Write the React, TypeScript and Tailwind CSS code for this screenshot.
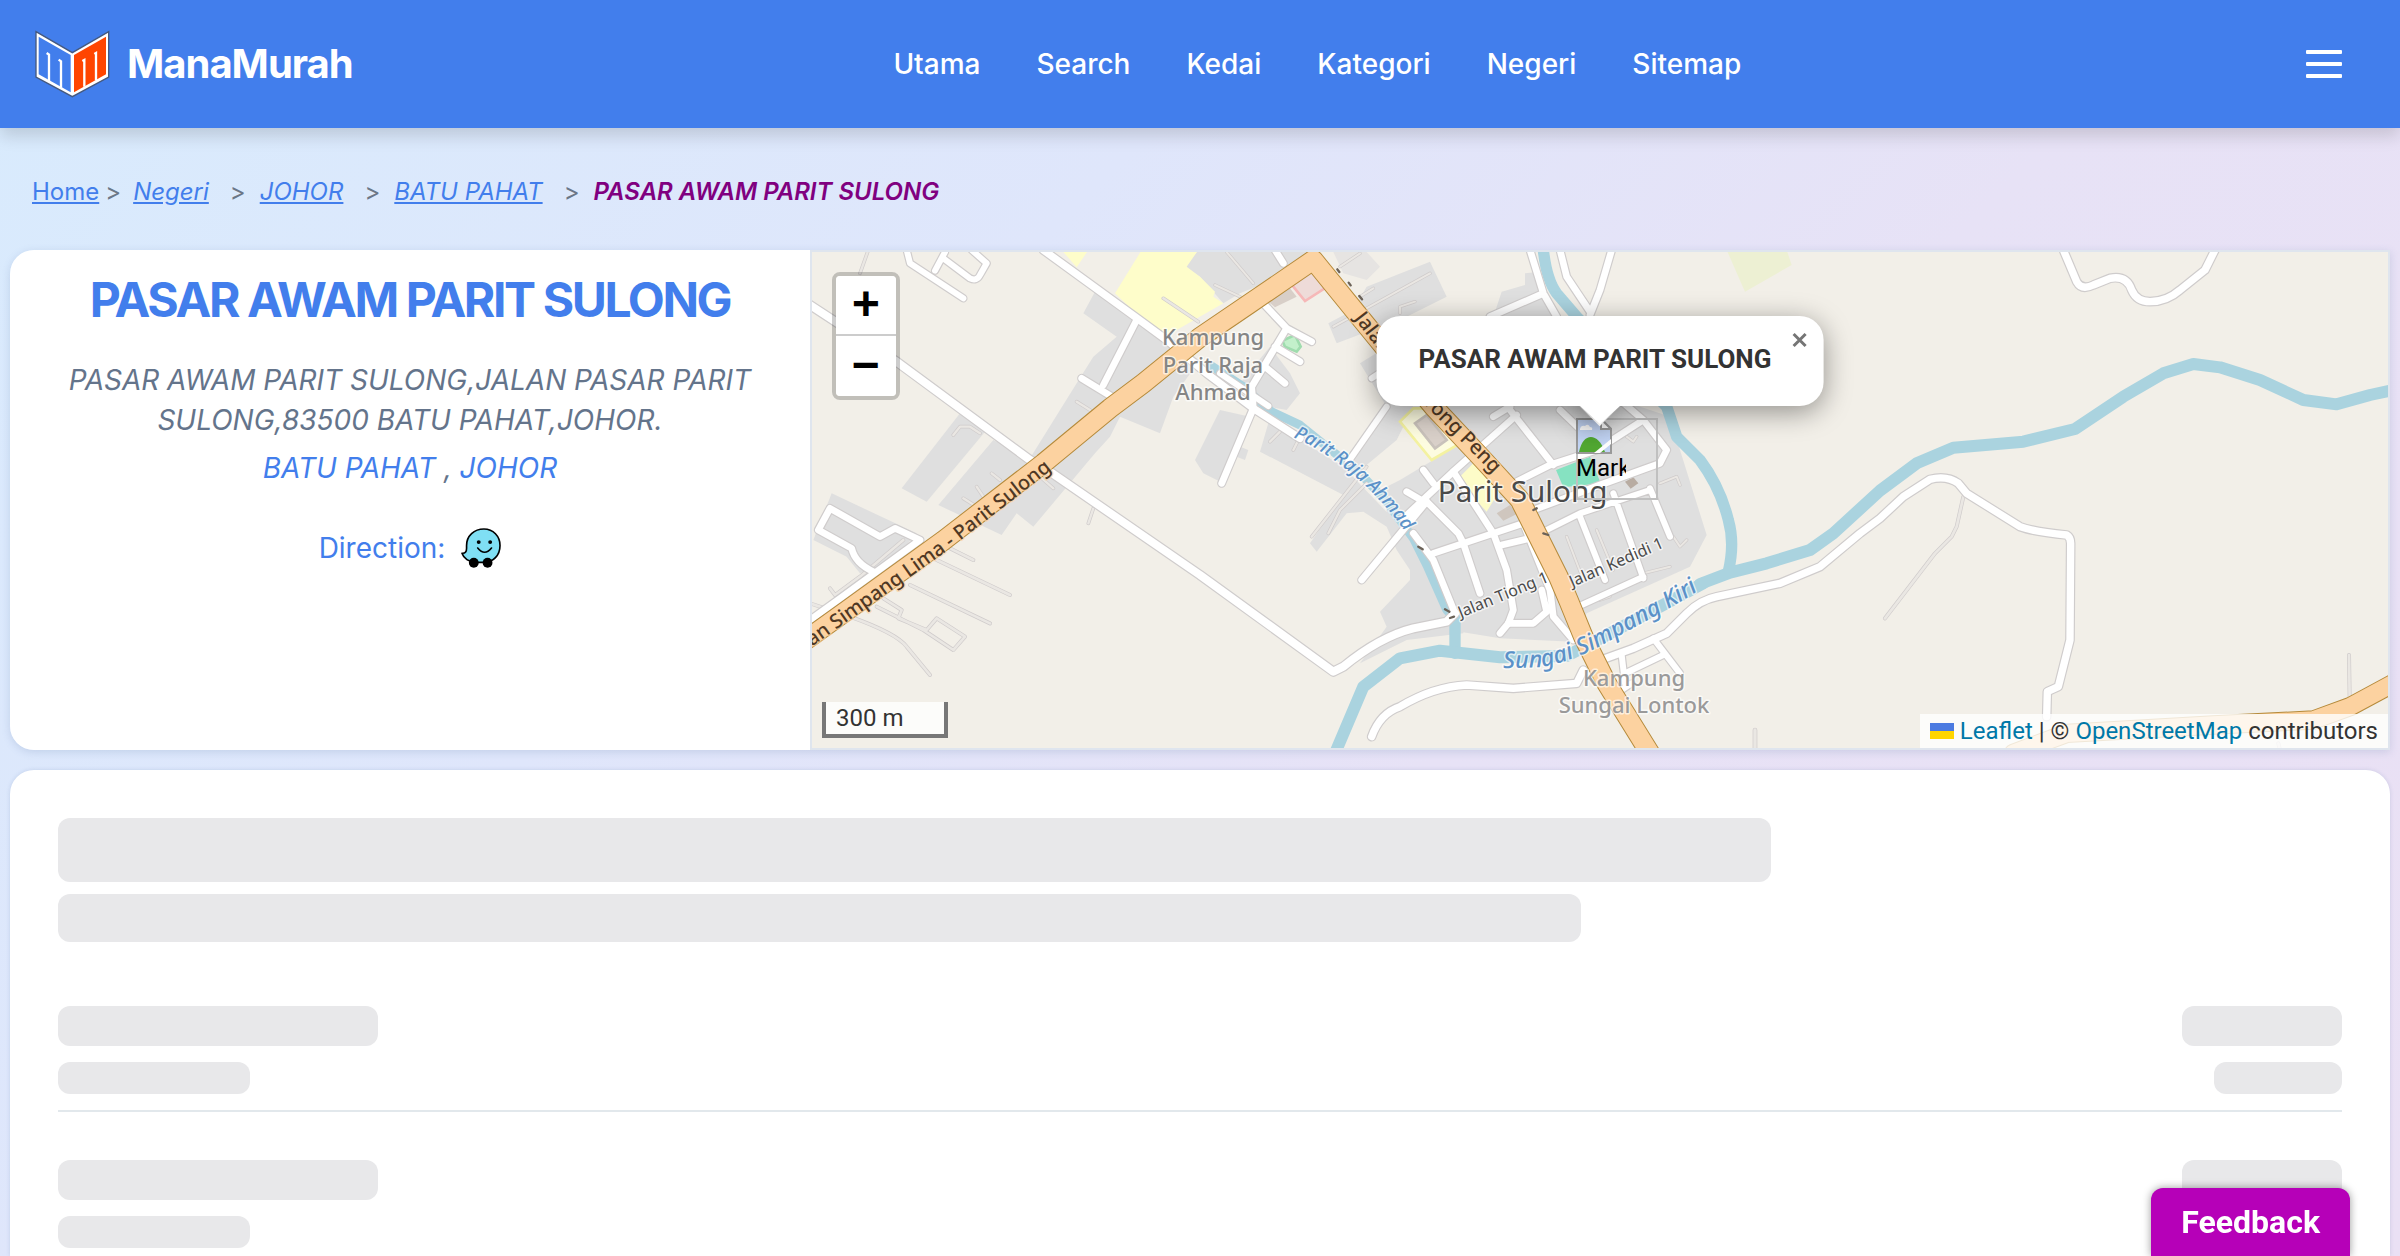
import React from "react";

const NAV_LINKS = ["Utama", "Search", "Kedai", "Kategori", "Negeri", "Sitemap"];
const CRUMBS = ["Negeri", "JOHOR", "BATU PAHAT"];

/* Map geometry: [horizontal offset of the tile, path data, stroke width]. */
type Line = [number, string, number];
type Area = [number, string, string, string?];

const A = 0;
const B = 1170;
const C = 2070;
const D = 3210;

const RES = "#dfdfdf";

const AREAS: Area[] = [
  [A, "M855 125L985 210L1075 290L1170 330L1090 440L1050 550L930 500L900 560L855 610L670 830L620 790L575 855L385 765L550 570L660 625L800 400L850 320L920 260L820 190Z", RES],
  [A, "M450 490L525 545L350 755L275 715Z", RES],
  [A, "M65 730L320 850L250 930L150 970L110 920L10 870Z", RES],
  [B, "M-5 0L340 0L340 40L290 60L120 130L70 160L0 80L-45 50Z", RES],
  [B, "M60 480L150 500L120 590L145 600L135 630L110 620L70 700L10 670L-15 630Z", RES],
  [B, "M120 400L210 290L270 370L300 430L260 480L205 470Z", RES],
  [B, "M215 485L300 570L430 650L640 870L740 1080L790 1090L790 1150L620 1170L480 1240L560 1130L540 1085L630 990L630 960L590 900L560 830L490 785L440 790L350 905L330 880L430 735L180 605Z", RES],
  [B, "M385 220L460 180L500 110L690 35L740 140L620 200L410 280Z", RES],
  [B, "M400 6L500 6L540 50L500 90L430 70Z", "#e6e4e2"],
  [B, "M905 125L975 105L975 70L1020 65L1060 200L880 200Z", RES],
  [B, "M480 340L560 290L640 470L590 570L470 670L430 650L560 470Z", RES],
  [B, "M640 470L1290 460L1410 500L1440 600L1520 855L1470 950L1160 1090L1120 1175L900 1165L780 1145L770 1100L700 980L630 870L560 800L560 710L600 690L700 630L800 560Z", RES],
  [A, "M995 0L1165 0L1130 50L1170 80L1215 125L1210 140L1240 160L1100 240L1060 270L915 130Z", "#fefdca"],
  [A, "M755 0L835 0L800 52Z", "#fefdca"],
  [B, "M600 515L640 475L690 475L780 580L695 630Z", "#fdfce0", "#f4f2a0"],
  [B, "M645 520L680 495L740 570L705 595Z", "#d9d0c9", "#c9c2bb"],
  [B, "M770 690L820 640L900 720L860 785Z", "#fdfcc8"],
  [B, "M890 790L930 765L955 790L910 812Z", "#cfc6be"],
  [B, "M272 100L330 50L385 108L315 153Z", "#eedbd8", "#f6b8b8"],
  [B, "M205 155L270 115L290 140L225 172Z", "#d8cfc8"],
  [B, "M247 272L285 255L302 290L290 305L255 290Z", "#c3f0cb", "#9fdcae"],
  [C, "M168 660L270 620L302 700L190 712Z", "#86e2c1"],
  [C, "M375 695L400 682L415 700L392 716Z", "#b8aca2"],
  [C, "M680 0L860 0L875 45L735 125Z", "#edf0d3"],
];

const WATER: Line[] = [
  [B, "M30 345L130 410L215 485L300 525L480 670L560 755L640 865L680 945L740 1080L765 1110", 26],
  [B, "M765 1100L765 1210", 34],
  [C, "M130 0Q140 90 170 130L230 200L500 470L530 560L600 630Q660 710 685 810Q705 880 685 965", 34],
  [B, "M405 1510L490 1310L600 1225L720 1202L900 1222L1100 1218L1230 1150L1380 1070L1510 1000", 36],
  [C, "M600 1002L690 968L800 940L930 900L1000 850L1140 722L1250 640L1360 593L1570 575L1725 537L1870 440L1990 370L2080 342L2160 352L2280 390L2410 450L2510 463L2610 435L2680 420", 36],
];

const SERVICE: Line[] = [
  [A, "M410 890L490 930M380 930L600 1035M300 1005L540 1120", 8],
  [A, "M0 1060L120 1100Q260 1150 290 1190L360 1275", 8],
  [A, "M200 1070L340 1140L430 1200L465 1160L380 1105L350 1140L265 1105L275 1080L220 1045", 8],
  [A, "M75 1035L150 980L280 870M75 1035L60 1015", 8],
  [A, "M430 555L450 530L480 530L510 550M150 70L175 0M850 775L835 820M1060 145L1165 215M800 455L840 480M690 680L730 715M460 745L500 770M500 710L520 740M545 670L570 690", 7],
  [B, "M80 6L160 100M45 105L120 140M400 230L690 70M600 190L600 170L645 155M420 50L480 10M480 140L520 115", 6],
  [B, "M335 860L500 650M385 850L420 780L500 700M210 575L240 545M280 600L295 570", 7],
  [C, "M480 700L530 680L540 705M200 860L250 990M290 840L340 960M380 560L400 575L410 560M520 860L540 890L560 870M300 1050L330 1040M430 970L510 950", 6],
  [D, "M250 740L230 830L215 860L165 910L15 1105M1407 1215L1409 1345M1195 1480L1200 1500", 8],
  [C, "M765 1440L765 1500", 10],
];

const ROADS: Line[] = [
  [A, "M0 165L260 335L660 630L730 672L1170 975L1570 1265L1600 1250Q1710 1160 1810 1135L1910 1115L1935 1090", 24],
  [A, "M700 0L975 200L1070 270L1190 370L1330 475L1470 565", 22],
  [B, "M60 370L205 468", 18],
  [A, "M980 210L880 405M815 385L905 440", 20],
  [A, "M290 0L300 40L460 145M375 62L405 6M400 25L480 85Q500 95 510 75L530 40L485 0", 18],
  [A, "M0 1110L90 1045L330 870L255 835L210 860L60 775L25 840L125 895Q135 940 190 965", 20],
  [B, "M225 0L250 40M185 155L260 235L335 275M260 235L155 410L160 475L65 700M225 290L300 335M195 350L255 400", 20],
  [B, "M560 470L445 635M515 385L545 365", 18],
  [B, "M610 805L765 660L950 495M670 660L700 700M620 725L680 760M680 755L485 990", 20],
  [B, "M680 755L775 850L790 880L840 1030M700 910L880 850L970 820M760 665L880 850L920 960L940 1080L925 1120L900 1150", 20],
  [B, "M640 850L700 930L765 1090M930 480L1060 645M905 885L990 865M925 1120L1000 1120L1040 1085L1025 1020M970 820L1050 1020L1060 1100L1120 1170", 20],
  [C, "M180 480L300 595M-20 500L30 470M50 695L150 645L290 600L430 510L360 450M430 510L500 600L480 640L300 705L100 780", 20],
  [C, "M130 845L240 790L450 720M450 715L510 860M340 730L430 985M240 800L315 990M245 1065L430 980", 18],
  [C, "M90 0L130 130L170 200M-30 200L130 130M180 0L200 80L270 185M335 0L300 120L270 195", 20],
  [B, "M515 1460Q540 1390 600 1370Q700 1310 800 1305L940 1315L1130 1300L1150 1260", 22],
  [C, "M290 1235L400 1195L500 1150L560 1090Q600 1050 650 1040L840 1000L960 950L1080 850L1140 805L1210 740L1290 688Q1340 675 1375 700L1400 730L1560 830Q1600 845 1700 855Q1712 862 1712 880L1710 1170L1675 1310L1642 1325L1640 1400", 22],
  [C, "M460 1165L540 1270M365 1215L375 1300M385 1265L490 1215M350 1330L395 1300", 18],
  [D, "M550 0L590 95Q605 122 640 105L690 85Q740 75 755 120Q770 155 810 155Q860 155 900 120L975 60L1005 0", 22],
];

const HIGHWAYS: Line[] = [
  [A, "M-30 1182L110 1082L400 872L700 640L900 475L1000 400L1170 262L1320 160L1510 30L1640 190L1730 300L1870 470L2020 630L2130 750L2180 850L2245 980L2275 1050L2320 1160L2390 1300L2520 1510", 56],
  [D, "M400 1510L560 1450L1000 1425L1300 1410L1410 1370L1540 1300", 52],
];

const CULVERTS: Line[] = [
  [B, "M412 58L418 66M446 98L452 106M478 138L486 148M1000 780L1010 775M1030 850L1045 855M735 1078L748 1085M750 1104L762 1100M655 890L668 898", 7],
];

function Strokes({ lines, color, extra = 0 }: { lines: Line[]; color: string; extra?: number }) {
  return (
    <>
      {lines.map(([x, d, w], i) => (
        <path key={i} transform={`translate(${x} 0)`} d={d} stroke={color} strokeWidth={w + extra} fill="none" strokeLinejoin="round" strokeLinecap="round" />
      ))}
    </>
  );
}

const halo = { paintOrder: "stroke", stroke: "#ffffff", strokeOpacity: 0.65, strokeWidth: 9, strokeLinejoin: "round" } as const;

function StreetMap() {
  return (
    <svg viewBox="6 6 4728 1488" preserveAspectRatio="xMidYMid slice" className="absolute inset-0 h-full w-full font-['Noto_Sans',sans-serif]" role="img" aria-label="Street map of Parit Sulong">
      <defs>
        <path id="lbl-west" d="M-168 1308L22 1178L412 902L726 658" />
        <path id="lbl-jalan" d="M1632 205L1740 345" />
        <path id="lbl-peng" d="M1805 425L2050 672" />
        <path id="lbl-parit" d="M1450 562Q1650 650 1800 865L1830 910" />
        <path id="lbl-sungai" d="M2080 1255L2190 1252Q2290 1235 2400 1172L2560 1085Q2640 1040 2720 985" />
        <path id="lbl-tiong" d="M1952 1104L2245 984" />
        <path id="lbl-kedidi" d="M2287 1012L2595 878" />
      </defs>
      <rect x="0" y="0" width="4740" height="1500" fill="#f2efe8" />
      {AREAS.map(([x, d, fill, stroke], i) => (
        <path key={i} transform={`translate(${x} 0)`} d={d} fill={fill} stroke={stroke ?? "none"} strokeWidth={8} />
      ))}
      <Strokes lines={WATER} color="#aad3df" />
      <Strokes lines={SERVICE} color="#cfcbcb" extra={4} />
      <Strokes lines={SERVICE} color="#eae7e3" />
      <Strokes lines={ROADS} color="#cfcccc" extra={7} />
      <Strokes lines={ROADS} color="#ffffff" />
      <Strokes lines={HIGHWAYS} color="#b58a3a" extra={6} />
      <Strokes lines={HIGHWAYS} color="#fcd2a0" />
      <Strokes lines={CULVERTS} color="#6b6258" />
      <g fontSize="66" fontWeight="500" fill="#858585" textAnchor="middle" {...halo}>
        <text x="1209" y="285">Kampung</text>
        <text x="1209" y="368">Parit Raja</text>
        <text x="1209" y="451">Ahmad</text>
        <g fill="#9a9a9a">
          <text x="2472" y="1308">Kampung</text>
          <text x="2472" y="1390">Sungai Lontok</text>
        </g>
      </g>
      <text x="2138" y="757" textAnchor="middle" fontSize="89" fill="#4a4a4a" {...halo}>Parit Sulong</text>
      <g fontSize="60" fontWeight="500" fill="#4f3824" {...halo} stroke="#fcd2a0">
        <text textAnchor="end"><textPath href="#lbl-west" startOffset="100%">Jalan Simpang Lima - Parit Sulong</textPath></text>
        <text><textPath href="#lbl-jalan">Jalan</textPath></text>
        <text textAnchor="end"><textPath href="#lbl-peng" startOffset="100%">Yong Peng</textPath></text>
      </g>
      <g fontStyle="italic" fontWeight="500" fill="#5b91c8" {...halo}>
        <text fontSize="56"><textPath href="#lbl-parit">Parit Raja Ahmad</textPath></text>
        <text fontSize="70"><textPath href="#lbl-sungai">Sungai Simpang Kiri</textPath></text>
      </g>
      <g fontSize="48" fill="#4a4a4a" {...halo}>
        <text><textPath href="#lbl-tiong">Jalan Tiong 1</textPath></text>
        <text><textPath href="#lbl-kedidi">Jalan Kedidi 1</textPath></text>
      </g>
    </svg>
  );
}

function Logo() {
  return (
    <svg viewBox="30 24 231 210" className="h-[70px] w-[77px]" aria-hidden="true">
      <path d="M36 32L145 95L254 32V168L145 227L36 168Z" fill="#fff" stroke="#45597f" strokeWidth="4" />
      <path d="M44 47L140 102V214L44 160Z" fill="#427eec" />
      <path d="M150 102L246 47V160L150 214Z" fill="#ff4500" />
      <path d="M68 96L75 101V180M104 116L111 121V200M175 120L181 117V197M211 99L216 96V178" fill="none" stroke="#fff" strokeWidth="7" />
    </svg>
  );
}

function WazeIcon() {
  return (
    <svg viewBox="36 38 122 122" className="size-10" aria-hidden="true">
      <path d="M106 41c28 0 49 22 49 50c0 30-21 52-49 52H82c-22 0-38-13-43-28c11 1 14-6 14-15V91c0-29 23-50 53-50z" fill="#7fdff4" stroke="#000" strokeWidth="5" strokeLinejoin="round" />
      <circle cx="75" cy="144" r="15" />
      <circle cx="117" cy="144" r="15" />
      <circle cx="90" cy="81" r="6" />
      <circle cx="125" cy="81" r="6" />
      <path d="M87 99q21 26 42 0" fill="none" stroke="#000" strokeWidth="5" strokeLinecap="round" />
    </svg>
  );
}

function MissingPicture() {
  return (
    <svg viewBox="0 0 36 36" className="size-9 shrink-0" aria-hidden="true">
      <path d="M1 1H25L35 11V35H1Z" fill="#c3d5f5" stroke="#9a9a9a" strokeWidth="2" />
      <path d="M4 11q1-4 5-3q3-3 5 1q3 0 2 3H4z" fill="#fff" />
      <path d="M3 34C7 14 22 14 29 34Z" fill="#51a832" />
      <path d="M25 1V11H35Z" fill="#fff" stroke="#9a9a9a" strokeWidth="2" />
      <path d="M18 35L35 21V26L24 35Z" fill="#fff" />
    </svg>
  );
}

function MapPanel() {
  return (
    <div className="relative min-w-0 flex-1 overflow-hidden border-2 border-[#dfe5ee] font-[Roboto,sans-serif] text-2xl text-[#333]">
      <StreetMap />

      <div className="absolute left-5 top-5 flex flex-col overflow-hidden rounded-lg border-4 border-black/20 bg-clip-padding font-['Liberation_Mono',monospace] text-5xl font-bold leading-none text-black">
        <button aria-label="Zoom in" className="flex h-[60px] w-[60px] items-center justify-center border-b-2 border-[#ccc] bg-white pt-1">+</button>
        <button aria-label="Zoom out" className="flex h-[60px] w-[60px] items-center justify-center bg-white pt-1">−</button>
      </div>

      <div className="absolute left-1/2 top-[166px] -ml-6 h-[82px] w-[82px] border-2 border-[#c0c0c0]">
        <div className="-ml-0.5 -mt-0.5 flex w-[50px] flex-col overflow-hidden text-black">
          <MissingPicture />
          <span className="leading-7">Marker</span>
        </div>
      </div>

      <div className="absolute left-1/2 top-16 -translate-x-1/2">
        <div className="absolute -bottom-[14px] left-1/2 size-[30px] -translate-x-1/2 rotate-45 bg-white shadow-[0_6px_28px_rgba(0,0,0,0.4)]" />
        <div className="relative whitespace-nowrap rounded-3xl bg-white pb-[26px] pl-[42px] pr-[52px] pt-[22px] shadow-[0_6px_28px_rgba(0,0,0,0.4)]">
          <strong className="block text-[26px] font-bold leading-[42px]">PASAR AWAM PARIT SULONG</strong>
          <button aria-label="Close popup" className="absolute right-4 top-4 text-[#757575]">
            <svg viewBox="0 0 16 16" className="size-4" stroke="currentColor" strokeWidth="3" aria-hidden="true">
              <path d="M2 2L14 14M14 2L2 14" />
            </svg>
          </button>
        </div>
        <div className="absolute -bottom-[18px] left-1/2 h-[19px] w-[42px] -translate-x-1/2 bg-white [clip-path:polygon(0_0,100%_0,50%_100%)]" />
      </div>

      <div className="absolute bottom-[10px] left-[10px] h-9 w-[126px] border-4 border-t-0 border-[#777] bg-white/80 pl-2.5 leading-8">300 m</div>

      <div className="absolute bottom-0 right-0 flex h-[34px] items-center gap-1.5 bg-white/80 px-2.5 leading-8">
        <a href="#leaflet" className="flex items-center gap-1.5 text-[#0078a8]">
          <svg viewBox="0 0 12 8" className="h-4 w-6" aria-hidden="true">
            <path fill="#4c7be1" d="M0 0h12v4H0z" />
            <path fill="#ffd500" d="M0 4h12v4H0z" />
          </svg>
          Leaflet
        </a>
        <span>|</span>
        <span>© <a href="#osm" className="text-[#0078a8]">OpenStreetMap</a> contributors</span>
      </div>
    </div>
  );
}

function SkeletonRow() {
  return (
    <li className="flex justify-between border-b-2 border-[#e2e8ec] pb-4 pt-12 first:pt-0 last:border-b-0 last:pb-2">
      <div className="flex flex-col gap-4">
        <div className="h-10 w-80 rounded-xl bg-[#e8e8ea]" />
        <div className="h-8 w-48 rounded-xl bg-[#e8e8ea]" />
      </div>
      <div className="flex flex-col items-end gap-4">
        <div className="h-10 w-40 rounded-xl bg-[#e8e8ea]" />
        <div className="h-8 w-32 rounded-xl bg-[#e8e8ea]" />
      </div>
    </li>
  );
}

export default function App() {
  return (
    <div className="flex min-h-screen flex-col bg-[linear-gradient(135deg,#d8ebfd_0%,#dfe6fb_35%,#e7e2f6_60%,#eae0f4_100%)] font-[Inter,sans-serif]">
      <header className="flex h-32 items-center justify-between bg-[#427eec] px-[34px] text-white shadow-[0_8px_16px_rgba(0,0,0,0.14)]">
        <a href="#home" className="flex items-center gap-4">
          <Logo />
          <span className="text-[40px] font-bold tracking-tight">ManaMurah</span>
        </a>
        <nav aria-label="Main" className="flex gap-14 text-[28px] font-medium">
          {NAV_LINKS.map((label) => (
            <a key={label} href={`#${label}`}>{label}</a>
          ))}
        </nav>
        <button aria-label="Menu" className="p-6">
          <svg viewBox="0 0 36 28" className="h-7 w-9" fill="currentColor" aria-hidden="true">
            <rect width="36" height="4" rx="1" />
            <rect y="12" width="36" height="4" rx="1" />
            <rect y="24" width="36" height="4" rx="1" />
          </svg>
        </button>
      </header>

      <nav aria-label="Breadcrumb" className="px-8 pb-10 pt-[46px] text-2xl leading-9">
        <ol className="flex text-[#427eec]">
          <li>
            <a href="#home" className="underline underline-offset-2">Home</a>
            <span className="ml-1.5 mr-3 text-[#6b7787]">&gt;</span>
          </li>
          {CRUMBS.map((label) => (
            <li key={label}>
              <a href={`#${label}`} className="italic underline underline-offset-2">{label}</a>
              <span className="ml-[21px] mr-3.5 text-[#6b7787]">&gt;</span>
            </li>
          ))}
          <li aria-current="page" className="font-semibold italic text-[#800080]">PASAR AWAM PARIT SULONG</li>
        </ol>
      </nav>

      <main className="flex flex-1 flex-col gap-5 px-2.5">
        <section className="flex h-[500px] overflow-hidden rounded-3xl rounded-r-none shadow-[0_2px_8px_rgba(80,110,160,0.2)]">
          <div className="w-[800px] shrink-0 bg-white px-12 pt-5 text-center text-[28px] leading-10">
            <h1 className="whitespace-nowrap text-5xl font-bold leading-[60px] tracking-tighter text-[#427eec]">PASAR AWAM PARIT SULONG</h1>
            <address className="mt-[30px] text-[#64748b]">
              <p>PASAR AWAM PARIT SULONG,JALAN PASAR PARIT SULONG,83500 BATU PAHAT,JOHOR.</p>
              <p className="mt-2">
                <a href="#district" className="text-[#427eec]">BATU PAHAT</a> , <a href="#state" className="text-[#427eec]">JOHOR</a>
              </p>
            </address>
            <div className="mt-10 flex items-center justify-center gap-4 text-[#427eec]">
              <span>Direction:</span>
              <a href="#waze" aria-label="Open in Waze"><WazeIcon /></a>
            </div>
          </div>
          <MapPanel />
        </section>

        <section aria-busy="true" aria-label="Loading" className="flex-1 rounded-t-3xl bg-white px-12 pt-12 shadow-[0_0_4px_rgba(80,110,160,0.2)]">
          <div className="h-16 w-3/4 rounded-xl bg-[#e8e8ea]" />
          <div className="mt-3 h-12 w-2/3 rounded-xl bg-[#e8e8ea]" />
          <ul className="mt-16">
            <SkeletonRow />
            <SkeletonRow />
          </ul>
        </section>
      </main>

      <button className="fixed bottom-0 right-[50px] h-[68px] rounded-t-xl bg-[#b600b8] px-[30px] font-[Roboto,sans-serif] text-[32px] font-bold text-white shadow-[0_0_8px_rgba(0,0,0,0.4)]">Feedback</button>
    </div>
  );
}
